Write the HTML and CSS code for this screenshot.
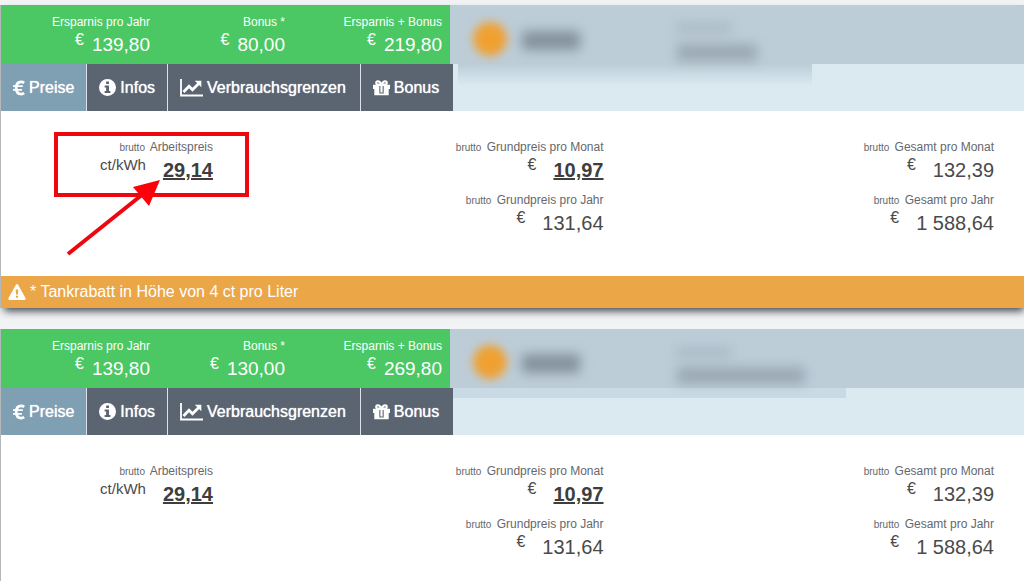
FILE: index.html
```
<!DOCTYPE html>
<html lang="de">
<head>
<meta charset="utf-8">
<meta name="viewport" content="width=device-width, initial-scale=1">
<title>Tarifvergleich</title>
<link rel="stylesheet" href="styles.css">
</head>
<body>
<svg class="sprite" aria-hidden="true">
  <symbol id="euro" viewBox="0 0 12 16"><path d="M11.200 2.800C10.300 2.200 9.400 1.900 8.300 1.900C5.300 1.900 3.200 4 3.200 8S5.300 14.100 8.300 14.100C9.400 14.100 10.300 13.800 11.200 13.200" fill="none" stroke="currentColor" stroke-width="2.700"/><path d="M0 6.200H9.800M0 9.800H9" fill="none" stroke="currentColor" stroke-width="1.800"/></symbol>
  <symbol id="info" viewBox="0 0 16 16"><path fill="currentColor" fill-rule="evenodd" d="M8 0a8 8 0 1 0 0 16A8 8 0 0 0 8 0ZM6.700 2.300H9.400V4.700H6.700ZM5.300 6H9.400V11.300H10.700V13.200H5.300V11.300H6.700V7.900H5.300Z"/></symbol>
  <symbol id="chart" viewBox="0 0 23 18"><path d="M1 0V16.500H23" fill="none" stroke="currentColor" stroke-width="1.800"/><path d="M3.500 13L9 7.300L12.500 10.800L18.500 4.800" fill="none" stroke="currentColor" stroke-width="2.800"/><path d="M14.800 1.800H21.300V8.300Z" fill="currentColor"/></symbol>
  <symbol id="gift" viewBox="0 0 17 16"><path d="M8.500 4.500C7.500 2.200 6.300 1.200 4.900 1.200C2.600 1.200 2.600 4.500 4.900 4.500ZM8.500 4.500C9.500 2.200 10.700 1.200 12.100 1.200C14.400 1.200 14.400 4.500 12.100 4.500Z" fill="none" stroke="currentColor" stroke-width="2"/><path fill="currentColor" fill-rule="evenodd" d="M0 4.700H17V9H15.700V15.300H1.300V9H0ZM6.300 6V13.600H10.700V6Z"/><path d="M7.400 5H9.600V12.500H7.400Z" fill="currentColor"/></symbol>
  <symbol id="warning" viewBox="0 0 18 16"><path fill="currentColor" fill-rule="evenodd" d="M9 0Q9.700 0 10.200.9L17.600 14.300Q18 15.900 16.500 16H1.500Q0 15.900.4 14.300L7.800.9Q8.300 0 9 0ZM7.700 5.500L8.100 10.500H9.900L10.300 5.500ZM7.900 11.700V13.800H10.100V11.700Z"/></symbol>
  <linearGradient id="fade" x2="0" y2="1"><stop stop-color="#bdcdd8"/><stop offset="1" stop-color="#dbeaf1"/></linearGradient>
</svg>
<main class="page">
  <article class="card">
    <header class="head">
      <dl class="savings">
        <div class="figure"><dt>Ersparnis pro Jahr</dt><dd><span class="unit">€</span><span>139,80</span></dd></div>
        <div class="figure"><dt>Bonus *</dt><dd><span class="unit">€</span><span>80,00</span></dd></div>
        <div class="figure"><dt>Ersparnis + Bonus</dt><dd><span class="unit">€</span><span>219,80</span></dd></div>
      </dl>
      <div class="supplier">
        <svg class="obscured" width="400" height="100" aria-hidden="true">
          <rect x="8" y="59" width="354" height="22" fill="url(#fade)"/>
          <circle class="sun" cx="40" cy="34" r="17"/>
          <g class="haze">
            <rect x="72" y="26" width="58" height="19"/>
            <rect x="226" y="19" width="56" height="8" opacity=".4"/>
            <rect x="227" y="39" width="80" height="17" opacity=".6"/>
          </g>
        </svg>
      </div>
    </header>
    <nav class="tabs">
      <button class="tab active" type="button"><svg width="12" height="16"><use href="#euro"/></svg>Preise</button>
      <button class="tab" type="button"><svg width="17" height="17"><use href="#info"/></svg>Infos</button>
      <button class="tab wide" type="button"><svg width="23" height="18"><use href="#chart"/></svg>Verbrauchsgrenzen</button>
      <button class="tab wide" type="button"><svg width="17" height="16"><use href="#gift"/></svg>Bonus</button>
    </nav>
    <div class="prices">
      <dl class="column">
        <div class="figure"><dt><small>brutto</small> Arbeitspreis</dt><dd><span class="unit work">ct/kWh</span><a href="#">29,14</a></dd></div>
      </dl>
      <dl class="column">
        <div class="figure"><dt><small>brutto</small> Grundpreis pro Monat</dt><dd><span class="unit">€</span><a href="#">10,97</a></dd></div>
        <div class="figure"><dt><small>brutto</small> Grundpreis pro Jahr</dt><dd><span class="unit">€</span><span>131,64</span></dd></div>
      </dl>
      <dl class="column">
        <div class="figure"><dt><small>brutto</small> Gesamt pro Monat</dt><dd><span class="unit">€</span><span>132,39</span></dd></div>
        <div class="figure"><dt><small>brutto</small> Gesamt pro Jahr</dt><dd><span class="unit">€</span><span>1 588,64</span></dd></div>
      </dl>
      <svg class="marker" width="200" height="130" aria-hidden="true">
        <rect x="5" y="5" width="191" height="61" fill="none" stroke="#ed0710" stroke-width="4"/>
        <path d="M17 125L92 65" stroke="#ed0710" stroke-width="4"/>
        <path d="M109 51L82 58L98 77Z" fill="#ff0008"/>
      </svg>
    </div>
    <p class="notice"><svg width="18" height="16" aria-hidden="true"><use href="#warning"/></svg>* Tankrabatt in Höhe von 4 ct pro Liter</p>
  </article>

  <article class="card">
    <header class="head">
      <dl class="savings">
        <div class="figure"><dt>Ersparnis pro Jahr</dt><dd><span class="unit">€</span><span>139,80</span></dd></div>
        <div class="figure"><dt>Bonus *</dt><dd><span class="unit">€</span><span>130,00</span></dd></div>
        <div class="figure"><dt>Ersparnis + Bonus</dt><dd><span class="unit">€</span><span>269,80</span></dd></div>
      </dl>
      <div class="supplier">
        <svg class="obscured" width="400" height="100" aria-hidden="true">
          <rect x="3" y="59" width="393" height="10" fill="#cadae4"/>
          <circle class="sun" cx="40" cy="33" r="17"/>
          <g class="haze">
            <rect x="72" y="25" width="58" height="19"/>
            <rect x="226" y="19" width="56" height="8" opacity=".4"/>
            <rect x="227" y="38" width="128" height="17" opacity=".6"/>
          </g>
        </svg>
      </div>
    </header>
    <nav class="tabs">
      <button class="tab active" type="button"><svg width="12" height="16"><use href="#euro"/></svg>Preise</button>
      <button class="tab" type="button"><svg width="17" height="17"><use href="#info"/></svg>Infos</button>
      <button class="tab wide" type="button"><svg width="23" height="18"><use href="#chart"/></svg>Verbrauchsgrenzen</button>
      <button class="tab wide" type="button"><svg width="17" height="16"><use href="#gift"/></svg>Bonus</button>
    </nav>
    <div class="prices">
      <dl class="column">
        <div class="figure"><dt><small>brutto</small> Arbeitspreis</dt><dd><span class="unit work">ct/kWh</span><a href="#">29,14</a></dd></div>
      </dl>
      <dl class="column">
        <div class="figure"><dt><small>brutto</small> Grundpreis pro Monat</dt><dd><span class="unit">€</span><a href="#">10,97</a></dd></div>
        <div class="figure"><dt><small>brutto</small> Grundpreis pro Jahr</dt><dd><span class="unit">€</span><span>131,64</span></dd></div>
      </dl>
      <dl class="column">
        <div class="figure"><dt><small>brutto</small> Gesamt pro Monat</dt><dd><span class="unit">€</span><span>132,39</span></dd></div>
        <div class="figure"><dt><small>brutto</small> Gesamt pro Jahr</dt><dd><span class="unit">€</span><span>1 588,64</span></dd></div>
      </dl>
    </div>
  </article>
</main>
</body>
</html>
```
FILE: styles.css
```
* { box-sizing: border-box; }

body {
  margin: 0;
  background: #f2f3f4;
  color: #4a4a4a;
  font-family: "Liberation Sans", Arial, sans-serif;
}

dl, dd, p { margin: 0; }

.sprite {
  position: absolute;
  width: 0;
  height: 0;
}

.page {
  display: flex;
  flex-direction: column;
  gap: 21px;
  height: 100vh;
  padding-top: 5px;
  overflow: hidden;
}

.card {
  flex: none;
  border-left: 1px solid #b4b8bb;
  background: #fff;
  box-shadow: 2px 5px 8px -2px #3c434f;
}

.page .card + .card { box-shadow: none; }

.head { display: flex; }

.savings {
  display: grid;
  grid-template-columns: 149px 135px 157px;
  width: 449px;
  padding: 9px 0 7px;
  background: #4bc864;
  color: #fff;
}

.figure {
  display: flex;
  flex-direction: column;
  align-items: flex-end;
  gap: 2px;
}

.savings .figure { gap: 3px; }

.figure dt {
  font-size: 12px;
  line-height: 16px;
  white-space: nowrap;
}

.figure dd {
  display: flex;
  gap: 17px;
  font-size: 20px;
  line-height: 24px;
  white-space: nowrap;
}

.savings dd {
  gap: 8px;
  font-size: 19px;
}

.figure .unit {
  font-size: 16px;
  line-height: 14px;
}

.figure .work { font-size: 15px; }

.figure a {
  color: #3e3e3e;
  font-weight: bold;
}

.prices dt { color: #65686c; }

.prices small {
  margin-right: 2px;
  font-size: 10px;
}

.supplier {
  position: relative;
  flex: 1;
  background: #bdcdd8;
}

.obscured {
  position: absolute;
  top: 0;
  left: 0;
}

.sun {
  fill: #f0a030;
  filter: blur(5px);
}

.haze {
  fill: #84919c;
  filter: blur(6px);
}

.tabs {
  display: flex;
  gap: 1px;
  background: #dbeaf1;
}

.tab {
  display: flex;
  align-items: center;
  gap: 4px;
  height: 47px;
  padding: 0 12px;
  border: 0;
  background: #5a6571;
  box-shadow: 1px 0 #dce2e7;
  color: #fff;
  font: 16px "Liberation Sans", Arial, sans-serif;
  text-shadow: 0 0 1px #fff;
}

.tab.wide { padding-right: 14px; }

.tab:last-child { box-shadow: none; }

.tab.active { background: #7f9fb3; }

.prices {
  position: relative;
  display: grid;
  grid-template-columns: 212px 1fr 1fr;
  min-height: 165px;
  padding: 28px 30px 0 0;
}

.column {
  display: flex;
  flex-direction: column;
  gap: 10px;
}

.marker {
  position: absolute;
  top: 18px;
  left: 50px;
}

.notice {
  display: flex;
  align-items: center;
  gap: 4px;
  height: 32px;
  padding-left: 7px;
  background: #eba648;
  color: #fff;
  font-size: 16px;
}
```
